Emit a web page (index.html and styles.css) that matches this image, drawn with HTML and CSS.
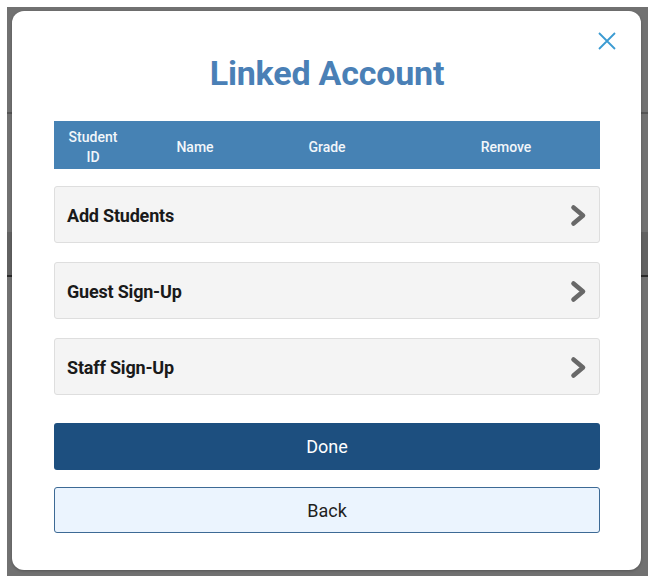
FILE: index.html
```html
<!DOCTYPE html>
<html lang="en">
<head>
<meta charset="utf-8">
<title>Linked Account</title>
<link rel="stylesheet" href="styles.css">
</head>
<body>
<div class="screen">
  <div class="backdrop">
    <div class="modal" role="dialog" aria-labelledby="modal-title">
      <button class="close" aria-label="Close">
        <svg width="18" height="18" viewBox="0 0 18 18"><path d="M1 1 L17 17 M17 1 L1 17" stroke="#3b9bd2" stroke-width="1.8" fill="none"/></svg>
      </button>
      <h1 class="title" id="modal-title">Linked Account</h1>
      <div class="table-head">
        <div class="th th-id">Student ID</div>
        <div class="th">Name</div>
        <div class="th">Grade</div>
        <div class="th th-remove">Remove</div>
      </div>
      <div class="options">
        <a class="option" href="#"><span>Add Students</span>
          <svg class="chev" width="17" height="23" viewBox="0 0 17 23"><polyline points="3.5,3.5 13,11.5 3.5,19.5" fill="none" stroke="#686868" stroke-width="4.6" stroke-linejoin="round" stroke-linecap="round"/></svg>
        </a>
        <a class="option" href="#"><span>Guest Sign-Up</span>
          <svg class="chev" width="17" height="23" viewBox="0 0 17 23"><polyline points="3.5,3.5 13,11.5 3.5,19.5" fill="none" stroke="#686868" stroke-width="4.6" stroke-linejoin="round" stroke-linecap="round"/></svg>
        </a>
        <a class="option" href="#"><span>Staff Sign-Up</span>
          <svg class="chev" width="17" height="23" viewBox="0 0 17 23"><polyline points="3.5,3.5 13,11.5 3.5,19.5" fill="none" stroke="#686868" stroke-width="4.6" stroke-linejoin="round" stroke-linecap="round"/></svg>
        </a>
      </div>
      <button class="btn btn-done">Done</button>
      <button class="btn btn-back">Back</button>
    </div>
  </div>
</div>
</body>
</html>
```
FILE: styles.css
```css
* { box-sizing: border-box; }
html, body { margin: 0; padding: 0; background: #ffffff; }
body { font-family: Roboto, "Noto Sans", "Liberation Sans", sans-serif; }

.screen {
  width: 656px;
  height: 580px;
  padding: 7px 8px 4px 7px;
  background: #ffffff;
}

.backdrop {
  width: 641px;
  height: 569px;
  padding: 4px 7px 6px 5px;
  background:
    linear-gradient(to bottom, transparent 105px, #555 105px, #555 107px, transparent 107px),
    linear-gradient(to bottom, transparent 225px, #626262 225px, #626262 268px, transparent 268px),
    linear-gradient(to bottom, transparent 268px, #2a2a2a 268px, #2a2a2a 270px, transparent 270px),
    #717171;
}

.modal {
  position: relative;
  width: 629px;
  height: 559px;
  background: #ffffff;
  border-radius: 12px;
  padding: 42px 41px 0 42px;
  display: flex;
  flex-direction: column;
  box-shadow: 0 1px 3px rgba(0,0,0,0.25);
}

.close {
  position: absolute;
  top: 21px;
  right: 25px;
  width: 18px;
  height: 18px;
  padding: 0;
  border: 0;
  background: none;
  display: block;
}
.close svg { display: block; }

.title {
  margin: 0;
  font-size: 34px;
  line-height: 40px;
  font-weight: 700;
  color: #4a80b6;
  text-align: center;
  letter-spacing: -0.2px;
}

.table-head {
  margin-top: 28px;
  height: 48px;
  padding-top: 4px;
  background: #4682b4;
  display: grid;
  grid-template-columns: 78px 126px 138px 1fr;
  align-items: center;
  color: #f2f6fa;
  font-size: 14px;
  line-height: 20px;
  font-weight: 500;
}
.th { text-align: center; }
.th-id { padding: 0 12px; }
.th-remove { padding-left: 16px; }

.options {
  margin-top: 17px;
  display: flex;
  flex-direction: column;
  gap: 19px;
}

.option {
  height: 57px;
  display: flex;
  align-items: center;
  justify-content: space-between;
  padding: 2px 12px 0 12px;
  background: #f4f4f4;
  border: 1px solid #dedede;
  border-radius: 3px;
  color: #1a1a1a;
  font-size: 18px;
  font-weight: 700;
  letter-spacing: -0.2px;
  text-decoration: none;
}
.chev { display: block; }

.btn {
  display: block;
  width: 100%;
  font-family: inherit;
  font-size: 18px;
  font-weight: 400;
  border-radius: 3px;
  padding: 0;
}
.btn-done {
  margin-top: 28px;
  height: 47px;
  background: #1d4f7f;
  color: #ffffff;
  border: 0;
}
.btn-back {
  margin-top: 17px;
  height: 46px;
  background: #ebf4fe;
  color: #1f1f1f;
  border: 1px solid #3d6a95;
}
```
